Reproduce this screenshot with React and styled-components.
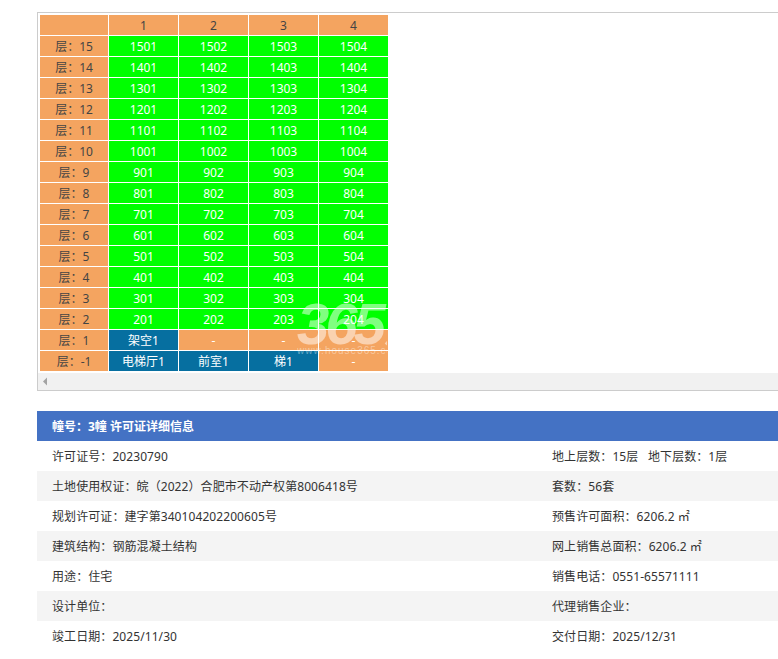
import React from "react";
import styled, { createGlobalStyle } from "styled-components";

const Global = createGlobalStyle`
  html, body { margin: 0; padding: 0; background: #fff; overflow: hidden; }
  body { font-family: "Noto Sans", "Noto Sans CJK SC", sans-serif; width: 778px; height: 659px; }
`;
const Page = styled.div`
  width: 741px;
  padding: 12px 0 0 37px;
  overflow: hidden;
`;
const ScrollBox = styled.div`
  position: relative;
  height: 375px;
  width: 900px;
  border: 1px solid #ccc;
  padding: 2px 0 0 2px;
  display: flex;
  flex-direction: column;
`;
const Table = styled.table`
  border-collapse: separate;
  border-spacing: 0;
  table-layout: fixed;
  width: 348px;
  flex: none;
  font-size: 12px;
  line-height: 18px;
`;
const Cell = styled.td`
  box-sizing: border-box;
  height: 21px;
  padding: 2px 0 0;
  text-align: center;
  white-space: nowrap;
  border-right: 1px solid #fff;
  border-bottom: 1px solid #fff;
  color: ${p => (p.$kind === "head" || p.$kind === "floor" ? "#444" : "#fff")};
  background: ${p => ({ head: "#f4a460", floor: "#f4a460", sale: "#00ff00", other: "#066fa0", none: "#f4a460" }[p.$kind])};
  &:last-child { border-right: 0; }
  tr:last-child & { border-bottom: 0; height: 20px; }
`;
const Watermark = styled.div`
  position: absolute;
  left: 259px;
  top: 286px;
  width: 90px;
  overflow: hidden;
  color: rgba(255, 255, 255, 0.5);
  pointer-events: none;
`;
const MarkBig = styled.div`
  font: italic 700 58px/50px "Liberation Sans", "Noto Sans CJK SC", sans-serif;
  letter-spacing: -4px;
  white-space: nowrap;
`;
const MarkSmall = styled.div`
  font: 400 10px/12px "Liberation Sans", sans-serif;
  letter-spacing: 1px;
  white-space: nowrap;
  margin-top: -4px;
  color: rgba(255, 255, 255, 0.4);
`;
const Scrollbar = styled.div`
  margin: 2px 0 0 -2px;
  height: 17px;
  background: #f1f1f1;
  display: flex;
  align-items: center;
  padding-left: 5px;
`;
const Panel = styled.section`
  margin-top: 20px;
  width: 741px;
`;
const PanelTitle = styled.div`
  box-sizing: border-box;
  height: 30px;
  padding: 2px 0 0 15px;
  line-height: 28px;
  background: #4472c4;
  color: #fff;
  font-size: 12px;
  font-weight: 700;
`;
const InfoRow = styled.div`
  display: grid;
  grid-template-columns: 500px 1fr;
  height: 30px;
  background: ${p => (p.$alt ? "#f4f4f4" : "#fff")};
`;
const InfoCell = styled.div`
  padding: 2px 0 0 15px;
  font-size: 12px;
  line-height: 28px;
  letter-spacing: 0.08px;
  color: #333;
  white-space: pre;
`;

const C = "\uFF1A";
const floors = [15, 14, 13, 12, 11, 10, 9, 8, 7, 6, 5, 4, 3, 2];
const info = [
  [`许可证号${C}20230790`, `地上层数${C}15层   地下层数${C}1层`],
  [`土地使用权证${C}皖\uFF082022\uFF09合肥市不动产权第8006418号`, `套数${C}56套`],
  [`规划许可证${C}建字第340104202200605号`, `预售许可面积${C}6206.2 ㎡`],
  [`建筑结构${C}钢筋混凝土结构`, `网上销售总面积${C}6206.2 ㎡`],
  [`用途${C}住宅`, `销售电话${C}0551-65571111`],
  [`设计单位${C}`, `代理销售企业${C}`],
  [`竣工日期${C}2025/11/30`, `交付日期${C}2025/12/31`],
];

export default function App() {
  return (
    <Page>
      <Global />
      <ScrollBox>
        <Table>
          <colgroup>
            <col style={{ width: 69 }} />
            <col style={{ width: 70 }} />
            <col style={{ width: 70 }} />
            <col style={{ width: 70 }} />
            <col style={{ width: 69 }} />
          </colgroup>
          <tbody>
            <tr>
              <Cell $kind="head" />
              {[1, 2, 3, 4].map(n => <Cell key={n} $kind="head">{n}</Cell>)}
            </tr>
            {floors.map(f => (
              <tr key={f}>
                <Cell $kind="floor">{`层${C}${f}`}</Cell>
                {["01", "02", "03", "04"].map(u => <Cell key={u} $kind="sale">{f}{u}</Cell>)}
              </tr>
            ))}
            <tr>
              <Cell $kind="floor">{`层${C}1`}</Cell>
              <Cell $kind="other">架空1</Cell>
              <Cell $kind="none">-</Cell>
              <Cell $kind="none">-</Cell>
              <Cell $kind="none">-</Cell>
            </tr>
            <tr>
              <Cell $kind="floor">{`层${C}-1`}</Cell>
              <Cell $kind="other">电梯厅1</Cell>
              <Cell $kind="other">前室1</Cell>
              <Cell $kind="other">梯1</Cell>
              <Cell $kind="none">-</Cell>
            </tr>
          </tbody>
        </Table>
        <Scrollbar>
          <svg width="5" height="9" viewBox="0 0 5 9"><path d="M4 0.5V8.5L0 4.5Z" fill="#a3a3a3" /></svg>
        </Scrollbar>
        <Watermark>
          <MarkBig>365淘</MarkBig>
          <MarkSmall>www.house365.com</MarkSmall>
        </Watermark>
      </ScrollBox>
      <Panel>
        <PanelTitle>{`幢号${C}3幢 许可证详细信息`}</PanelTitle>
        {info.map((r, i) => (
          <InfoRow key={r[0]} $alt={i % 2 === 1}>
            <InfoCell>{r[0]}</InfoCell>
            <InfoCell>{r[1]}</InfoCell>
          </InfoRow>
        ))}
      </Panel>
    </Page>
  );
}
